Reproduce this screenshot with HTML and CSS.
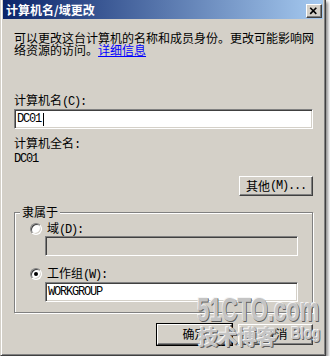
FILE: index.html
```html
<!DOCTYPE html>
<html lang="zh-CN">
<head>
<meta charset="utf-8">
<title>计算机名/域更改</title>
<link rel="stylesheet" href="styles.css">
</head>
<body>
<div class="win">
  <div class="title">
    <span class="title-text">计算机名/域更改</span>
    <span class="close"><svg width="16" height="14" viewBox="0 0 16 14"><path d="M4.5 3.5 L11 10 M11 3.5 L4.5 10" stroke="#000" stroke-width="1.7" fill="none"/></svg></span>
  </div>
  <div class="body">
    <p class="desc">可以更改这台计算机的名称和成员身份。更改可能影响网<br>络资源的访问。<a class="link" href="#">详细信息</a></p>
    <div class="label l1">计算机名<span class="lat">(C):</span></div>
    <div class="field f1"><span class="lat">DC01</span><span class="caret"></span></div>
    <div class="label l2">计算机全名<span class="lat">:</span></div>
    <div class="lat fullname">DC01</div>
    <div class="row-right"><div class="btn">其他<span class="lat">(M)...</span></div></div>
    <fieldset class="group">
      <legend class="legend">隶属于</legend>
      <div class="radio-row r1"><span class="radio"></span><span>域<span class="lat">(D):</span></span></div>
      <div class="field indent disabled"></div>
      <div class="radio-row r2"><span class="radio checked"></span><span>工作组<span class="lat">(W):</span></span></div>
      <div class="field indent f2"><span class="lat">WORKGROUP</span></div>
    </fieldset>
    <div class="actions">
      <div class="btn wide default">确定</div>
      <div class="btn wide">取消</div>
    </div>
  </div>
  <span class="wm wm1">51CTO.com</span>
  <span class="wm wm2">技术博客</span>
  <span class="wm wm3">Blog</span>
</div>
</body>
</html>
```
FILE: styles.css
```css
* { box-sizing: border-box; }
html, body { margin: 0; padding: 0; background: #ffffff; }
body {
  font-family: "Noto Sans CJK SC", "Noto Sans", sans-serif;
  font-size: 12px;
  line-height: 12px;
  color: #000;
}
.win {
  position: relative;
  width: 326px;
  height: 356px;
  background: #d4d0c8;
  border-style: solid;
  border-width: 0 1px 1px 1px;
  border-color: #d4d0c8 #404040 #404040 #d4d0c8;
  box-shadow: inset 1px 0 #fff, inset -1px -1px #808080, 2px 2px 3px rgba(0,0,0,0.45);
  padding: 0 2px 2px 2px;
  overflow: hidden;
}
.title {
  height: 19px;
  background: linear-gradient(to right, #0a246a, #a6caf0);
  display: flex;
  align-items: center;
  justify-content: space-between;
  padding-left: 3px;
  padding-right: 1px;
}
.title-text {
  color: #fff;
  font-weight: bold;
  font-size: 12px;
  line-height: 12px;
}
.close {
  width: 16px;
  height: 14px;
  margin-top: 2px;
  background: #d4d0c8;
  border: 1px solid;
  border-color: #fff #404040 #404040 #fff;
  box-shadow: inset -1px -1px #808080;
  display: flex;
}
.close svg { display: block; margin: -1px 0 0 -1px; }
.body {
  padding: 0 10px 0 11px;
  display: flex;
  flex-direction: column;
}
.desc {
  margin: 13px 0 0 0;
  white-space: nowrap;
  line-height: 12px;
}
.link { color: #0000ff; text-decoration: underline; }
.lat {
  font-family: "Liberation Mono", monospace;
  font-size: 12px;
  letter-spacing: -1.2px;
}
.label { height: 12px; }
.l1 { margin-top: 38px; }
.l2 { margin-top: 8px; }
.field {
  height: 20px;
  margin-top: 3px;
  background: #fff;
  border: 1px solid;
  border-color: #808080 #fff #fff #808080;
  box-shadow: inset 1px 1px #404040, inset -1px -1px #d4d0c8;
  display: flex;
  align-items: center;
  padding-left: 2px;
}
.caret {
  width: 1px;
  height: 13px;
  background: #000;
  margin-left: 2px;
}
.fullname { margin-top: 4px; height: 12px; line-height: 12px; }
.row-right { display: flex; justify-content: flex-end; margin-top: 11px; }
.btn {
  width: 74px;
  height: 20px;
  background: #d4d0c8;
  border: 1px solid;
  border-color: #fff #404040 #404040 #fff;
  box-shadow: inset -1px -1px #808080;
  display: flex;
  align-items: center;
  justify-content: center;
  padding-bottom: 1px;
}
.group {
  margin: 10px 0 0 0;
  padding: 0 0 10px 0;
  border: 1px solid #808080;
  box-shadow: inset 1px 1px #fff, 1px 1px #fff;
  min-width: 0;
}
.legend {
  margin-left: 5px;
  padding: 0 2px;
  background: #d4d0c8;
  line-height: 12px;
  height: 12px;
}
.radio-row {
  display: flex;
  align-items: center;
  gap: 5px;
  height: 12px;
  margin-left: 15px;
}
.r1 { margin-top: 5px; }
.r2 { margin-top: 12px; }
.radio {
  position: relative;
  width: 12px;
  height: 12px;
  border-radius: 50%;
  background: #fff;
  border: 1px solid;
  border-color: #808080 #fff #fff #808080;
  box-shadow: inset 1px 1px #404040, inset -1px -1px #d4d0c8;
  flex: none;
}
.radio.checked::after {
  content: "";
  position: absolute;
  left: 3px;
  top: 3px;
  width: 4px;
  height: 4px;
  border-radius: 50%;
  background: #000;
}
.indent { margin-left: 30px; width: 253px; }
.disabled { background: #d4d0c8; margin-top: 1px; }
.f2 { margin-top: 2px; }
.actions {
  display: flex;
  justify-content: flex-end;
  gap: 6px;
  margin-top: 11px;
}
.btn.wide { width: 75px; height: 21px; }
.btn.default { outline: 1px solid #000; outline-offset: 0; }
.wm {
  position: absolute;
  font-weight: bold;
  color: #c4c4c4;
  text-shadow: -1px -1px 0 #f4f4f4, 1px 1px 0 #5e5e5e, 1px 0 0 #8a8a8a;
  white-space: nowrap;
  transform-origin: left top;
}
.wm1 {
  left: 196px;
  top: 292px;
  font-family: "Liberation Sans", sans-serif;
  font-size: 34px;
  line-height: 34px;
  transform: scaleX(0.65);
}
.wm2 {
  left: 197px;
  top: 327px;
  font-family: "Noto Sans CJK SC", sans-serif;
  font-size: 20px;
  line-height: 20px;
  letter-spacing: -0.5px;
}
.wm3 {
  left: 290px;
  top: 326px;
  font-family: "Liberation Sans", sans-serif;
  font-size: 16px;
  line-height: 16px;
  transform: scaleX(0.82);
}
```
